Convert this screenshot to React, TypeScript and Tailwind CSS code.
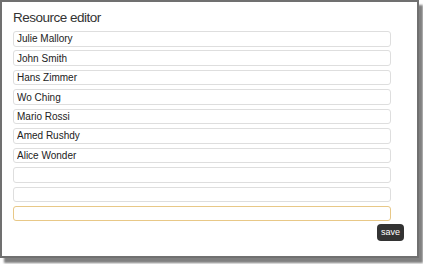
import React from "react";

const names = ["Julie Mallory", "John Smith", "Hans Zimmer", "Wo Ching", "Mario Rossi", "Amed Rushdy", "Alice Wonder", "", "", ""];

export default function App() {
  return (
    <div className="w-[423px] h-[264px] bg-white overflow-hidden" style={{ fontFamily: '"Liberation Sans", Arial, sans-serif' }}>
      <div className="w-[419px] h-[258px] bg-white border-2 border-[#707070] shadow-[4px_5px_2px_#808080] flex flex-col pl-[11px] pt-[7px]">
        <div className="text-[13.5px] leading-[17px] text-[#333] tracking-[-0.5px]">Resource editor</div>
        <div className="flex flex-col gap-[3.95px] mt-[5px]">
          {names.map((n, i) => (
            <input
              key={i}
              defaultValue={n}
              className={
                "w-[378px] h-[15.5px] rounded-[3px] border px-[3px] text-[10px] text-[#222] outline-none bg-white " +
                (i === 9 ? "border-[#e8c887]" : "border-[#dedede]")
              }
            />
          ))}
        </div>
        <div className="flex justify-end w-[391px] mt-[3px]">
          <button className="bg-[#333] text-white text-[9px] rounded-[4px] h-[17px] px-[4px] leading-[17px]">save</button>
        </div>
      </div>
    </div>
  );
}
